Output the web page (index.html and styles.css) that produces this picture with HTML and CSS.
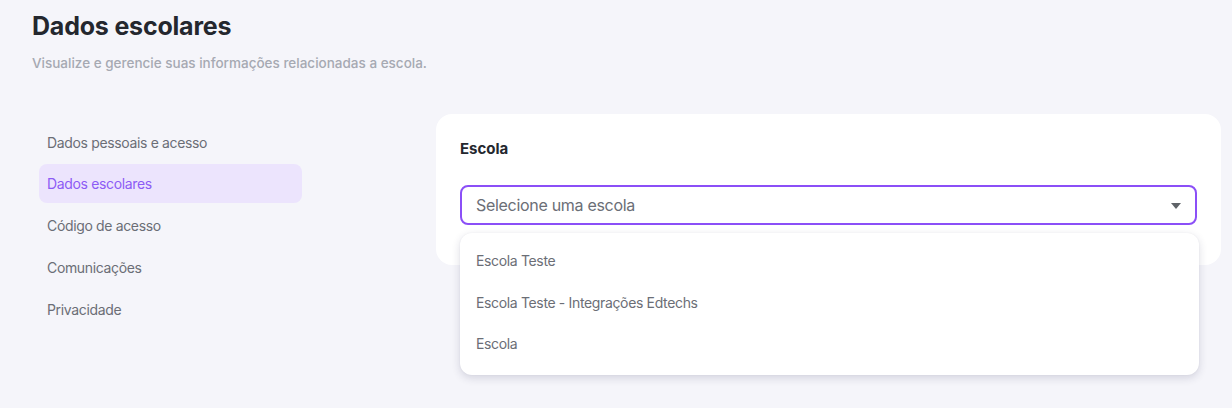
FILE: index.html
```html
<!DOCTYPE html>
<html lang="pt">
<head>
<meta charset="utf-8">
<link rel="stylesheet" href="styles.css">
</head>
<body>
<div class="page">
  <header class="head">
    <h1 class="title">Dados escolares</h1>
    <p class="subtitle">Visualize e gerencie suas informações relacionadas a escola.</p>
  </header>
  <div class="content">
    <nav class="side">
      <a class="nav-item">Dados pessoais e acesso</a>
      <a class="nav-item active">Dados escolares</a>
      <a class="nav-item">Código de acesso</a>
      <a class="nav-item">Comunicações</a>
      <a class="nav-item">Privacidade</a>
    </nav>
    <section class="card">
      <div class="label">Escola</div>
      <div class="select-wrap">
        <div class="select">
          <span class="placeholder">Selecione uma escola</span>
          <svg class="caret" width="10" height="6" viewBox="0 0 10 6"><path d="M0 0 H10 L5 6 Z" fill="#5f6368"/></svg>
        </div>
        <ul class="menu">
          <li class="opt">Escola Teste</li>
          <li class="opt">Escola Teste - Integrações Edtechs</li>
          <li class="opt">Escola</li>
        </ul>
      </div>
    </section>
  </div>
</div>
</body>
</html>
```
FILE: styles.css
```css
* { box-sizing: border-box; }
html, body { margin: 0; padding: 0; }
body {
  background: #f5f5fa;
  font-family: "Inter", "Liberation Sans", sans-serif;
  width: 1232px;
  height: 408px;
  overflow: hidden;
}
.page {
  padding: 10px 11px 0 32px;
}
.title {
  margin: 0;
  font-size: 25px;
  font-weight: 700;
  color: #24272e;
  line-height: 32px;
  letter-spacing: -0.2px;
}
.subtitle {
  margin: 12px 0 0 0;
  font-size: 13.5px;
  font-weight: 500;
  color: #a6a9b2;
  line-height: 18px;
}
.content {
  display: flex;
  margin-top: 42px;
  align-items: flex-start;
}
.side {
  display: flex;
  flex-direction: column;
  gap: 2.75px;
  width: 263px;
  margin-left: 7px;
  margin-top: 8.5px;
}
.nav-item {
  display: block;
  height: 39px;
  line-height: 39px;
  padding-left: 8px;
  border-radius: 8px;
  font-size: 14px;
  letter-spacing: -0.35px;
  color: #6b6e76;
}
.nav-item.active {
  background: #ece4fd;
  color: #8c5cf5;
}
.card {
  margin-left: 134px;
  flex: 1;
  background: #fff;
  border-radius: 16px;
  padding: 24px 24px 40px 24px;
  height: 151px;
}
.label {
  font-size: 15px;
  font-weight: 700;
  color: #24272e;
  line-height: 22px;
}
.select-wrap {
  position: relative;
  margin-top: 25px;
}
.select {
  height: 40px;
  border: 2px solid #8b4ff7;
  border-radius: 8px;
  display: flex;
  align-items: center;
  justify-content: space-between;
  padding: 0 14px 0 14px;
}
.placeholder {
  font-size: 16px;
  letter-spacing: -0.3px;
  color: #6b6e76;
}
.caret { margin-top: 1px; }
.menu {
  position: absolute;
  top: 48px;
  left: 0;
  right: -2px;
  margin: 0;
  padding: 7px 0 10px 0;
  list-style: none;
  background: #fff;
  border-radius: 12px;
  box-shadow: 0 3px 8px rgba(40, 40, 80, 0.16), 0 0 2px rgba(40, 40, 80, 0.06);
}
.opt {
  height: 41.5px;
  line-height: 41.5px;
  padding-left: 16px;
  font-size: 14px;
  letter-spacing: -0.35px;
  color: #6b6e76;
}
```
